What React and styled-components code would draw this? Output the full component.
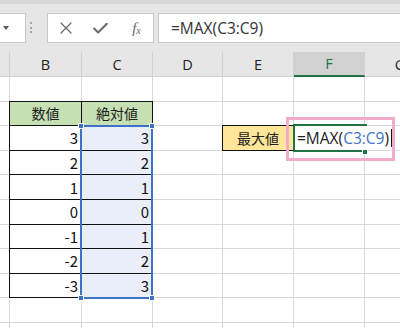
import styled, { createGlobalStyle, css } from 'styled-components'
import { X, Check } from 'lucide-react'

const GlobalStyle = createGlobalStyle`
  body {
    margin: 0;
    background: #fff;
    overflow: hidden;
  }
`

const COLS = ['', 'B', 'C', 'D', 'E', 'F', 'G']
const NUMS = [3, 2, 1, 0, -1, -2, -3]

export default function App() {
  const cells = []
  for (let r = 1; r <= 11; r++) {
    for (let c = 0; c < 7; c++) {
      const key = `${r}-${c}`
      const pos = { $col: c + 1, $row: r + 1 }

      if (r === 2 && (c === 1 || c === 2)) {
        cells.push(
          <Cell key={key} {...pos} $boxed $fill="#c6e0b4" $align="center">
            <Jp>{c === 1 ? '数値' : '絶対値'}</Jp>
          </Cell>
        )
      } else if (r >= 3 && r <= 9 && (c === 1 || c === 2)) {
        const v = NUMS[r - 3]
        cells.push(
          <Cell key={key} {...pos} $boxed $fill={c === 2 ? '#e9eef8' : '#fff'}>
            {c === 1 ? v : Math.abs(v)}
          </Cell>
        )
      } else if (r === 3 && c === 4) {
        cells.push(
          <Cell key={key} {...pos} $boxed $fill="#ffe699" $align="center">
            <Jp>最大値</Jp>
          </Cell>
        )
      } else if (r === 3 && c === 5) {
        cells.push(
          <Cell key={key} $col="6 / 8" $row={4} $align="start">
            <Formula>
              =MAX(<Ref>C3:C9</Ref>)<Caret />
            </Formula>
          </Cell>
        )
      } else if (r === 3 && c === 6) {
        // covered by the formula in F3
      } else {
        cells.push(<Cell key={key} {...pos} />)
      }
    }
  }

  return (
    <>
      <GlobalStyle />
      <Window>
        <FormulaBar>
          <NameBox>
            <Arrow />
          </NameBox>
          <Grip>
            <Dot />
            <Dot />
            <Dot />
          </Grip>
          <FxBox>
            <FxSlot>
              <X size={20} strokeWidth={1.5} />
            </FxSlot>
            <FxSlot>
              <Check size={19} strokeWidth={2.6} />
            </FxSlot>
            <FxSlot>
              <Fx>
                f<sub>x</sub>
              </Fx>
            </FxSlot>
          </FxBox>
          <FormulaInput>=MAX(C3:C9)</FormulaInput>
        </FormulaBar>

        <Sheet>
          {COLS.map((name, i) => (
            <HeadCell key={i} $active={name === 'F'}>
              {name}
            </HeadCell>
          ))}
          {cells}

          <RangeFrame>
            <Handle $v="top" $h="left" />
            <Handle $v="top" $h="right" />
            <Handle $v="bottom" $h="left" />
            <Handle $v="bottom" $h="right" />
          </RangeFrame>

          <EditFrame>
            <EditHandle />
          </EditFrame>

          <Callout />
        </Sheet>
      </Window>
    </>
  )
}

const Window = styled.div`
  width: 400px;
  height: 328px;
  overflow: hidden;
  background: #fff;
`

const FormulaBar = styled.div`
  height: 52px;
  box-sizing: border-box;
  background: #e6e6e6;
  border-top: 4px solid #d7d7d7;
  padding-top: 9px;
  display: flex;
  align-items: flex-start;
`

const NameBox = styled.div`
  width: 26px;
  height: 30px;
  box-sizing: border-box;
  background: #fff;
  border: 1px solid #c8c8c8;
  border-left: none;
  display: flex;
  align-items: center;
  padding-left: 3px;
`

const Arrow = styled.span`
  width: 0;
  height: 0;
  border-left: 3.5px solid transparent;
  border-right: 3.5px solid transparent;
  border-top: 4px solid #5a5a5a;
`

const Grip = styled.div`
  width: 3px;
  margin: 9px 0 0 4px;
  display: flex;
  flex-direction: column;
  gap: 2.5px;
`

const Dot = styled.span`
  width: 2px;
  height: 2px;
  background: #a8a8a8;
`

const FxBox = styled.div`
  width: 107px;
  height: 30px;
  margin-left: 14px;
  box-sizing: border-box;
  background: #fff;
  border: 1px solid #c8c8c8;
  display: flex;
  color: #6b6b6b;
`

const FxSlot = styled.div`
  width: 35px;
  display: flex;
  align-items: center;
  justify-content: center;
`

const Fx = styled.span`
  font-family: 'Liberation Serif', serif;
  font-style: italic;
  font-size: 15px;
  color: #666;
  margin-left: 2px;

  sub {
    font-size: 10px;
    vertical-align: -1px;
  }
`

const FormulaInput = styled.div`
  flex: 1;
  height: 30px;
  margin-left: 4px;
  box-sizing: border-box;
  background: #fff;
  border: 1px solid #c8c8c8;
  border-right: none;
  padding-left: 12px;
  display: flex;
  align-items: center;
  font-family: 'Open Sans', sans-serif;
  font-size: 15.5px;
  color: #333;
`

const Sheet = styled.div`
  position: relative;
  display: grid;
  grid-template-columns: 10px 72px 71px 70px 71px 71px 71px;
  grid-template-rows: 25px repeat(11, 24.6px);
  width: 456px;
`

const HeadCell = styled.div`
  grid-row: 1;
  box-sizing: border-box;
  border-right: 1px solid #d0d0d0;
  border-bottom: ${p => (p.$active ? '2px solid #217346' : '1px solid #d4d4d4')};
  background: ${p => (p.$active ? '#d2d2d2' : '#e6e6e6')};
  color: ${p => (p.$active ? '#217346' : '#222')};
  font-family: 'Open Sans', sans-serif;
  font-size: 14.5px;
  display: flex;
  align-items: center;
  justify-content: center;
`

const Cell = styled.div`
  grid-column: ${p => p.$col};
  grid-row: ${p => p.$row};
  box-sizing: border-box;
  border-right: 1px solid #d9d9d9;
  border-bottom: 1px solid #d9d9d9;
  background: ${p => p.$fill || '#fff'};
  display: flex;
  align-items: center;
  justify-content: ${p =>
    p.$align === 'center' ? 'center' : p.$align === 'start' ? 'flex-start' : 'flex-end'};
  padding: 0 3px;
  font-family: 'Noto Sans CJK JP', sans-serif;
  font-size: 15px;
  color: #111;
  ${p =>
    p.$boxed &&
    css`
      position: relative;
      margin: -1px 0 0 -1px;
      border: 1px solid #111;
    `}
`

const Jp = styled.span`
  font-size: 14px;
  color: #222;
`

const Formula = styled.span`
  display: flex;
  align-items: center;
  font-family: 'Open Sans', sans-serif;
  font-size: 15.5px;
  color: #222;
  white-space: nowrap;
`

const Ref = styled.span`
  color: #4472c4;
`

const Caret = styled.span`
  width: 1px;
  height: 18px;
  margin-left: 2px;
  background: #111;
`

const RangeFrame = styled.div`
  grid-column: 3;
  grid-row: 4 / 11;
  margin: -1px 0 -1px -2px;
  border: 2px solid #3d72c7;
  position: relative;
  z-index: 2;
  pointer-events: none;
`

const Handle = styled.span`
  position: absolute;
  width: 4px;
  height: 4px;
  background: #3d72c7;
  border: 1px solid #fff;
  ${p => (p.$v === 'top' ? 'top: -4px;' : 'bottom: -4px;')}
  ${p => (p.$h === 'left' ? 'left: -4px;' : 'right: -4px;')}
`

const EditFrame = styled.div`
  grid-column: 6;
  grid-row: 4;
  margin: -2px -2px -1px -1px;
  border: 2px solid #217346;
  border-right: none;
  position: relative;
  z-index: 3;
  pointer-events: none;
`

const EditHandle = styled.span`
  position: absolute;
  right: -1px;
  bottom: -5px;
  width: 4px;
  height: 4px;
  background: #217346;
  border: 1px solid #fff;
`

const Callout = styled.div`
  position: absolute;
  left: 286px;
  top: 65px;
  width: 109px;
  height: 44px;
  box-sizing: border-box;
  border: 3px solid #f2abc8;
  z-index: 4;
  pointer-events: none;
`
